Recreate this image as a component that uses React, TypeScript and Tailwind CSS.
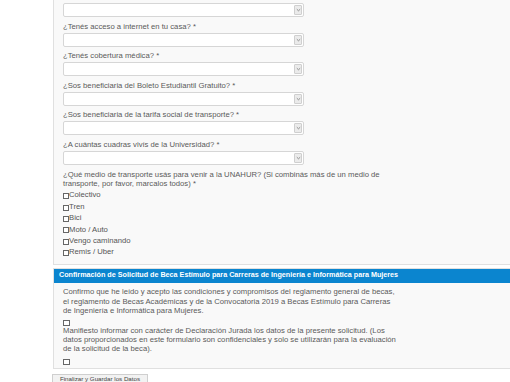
import React from "react";

const font = { fontFamily: '"Liberation Sans", Arial, sans-serif' };

function Select() {
  return (
    <div className="flex h-[14px] w-[241px] items-stretch rounded-[2px] border border-[#d6d6d6] bg-white">
      <div className="flex-1" />
      <div className="my-[1px] mr-[1px] flex w-[8px] items-center justify-center rounded-[1px] border border-[#cfcfcf] bg-[#ebebeb]">
        <svg width="5" height="4" viewBox="0 0 5 4">
          <path d="M0.8 1.2 L2.5 2.8 L4.2 1.2" fill="none" stroke="#777" strokeWidth="0.8" />
        </svg>
      </div>
    </div>
  );
}

function Field({ label }: { label: string }) {
  return (
    <div className="mb-[4.6px]">
      <div className="mb-[2px] whitespace-nowrap text-[7.7px] leading-[9px] text-[#5a5a5a]">{label}</div>
      <Select />
    </div>
  );
}

function Box() {
  return <span className="inline-block h-[6px] w-[6px] shrink-0 border border-[#666] bg-white" />;
}

const transports = ["Colectivo", "Tren", "Bici", "Moto / Auto", "Vengo caminando", "Remis / Uber"];

export default function App() {
  return (
    <div className="h-[382px] w-[510px] overflow-hidden bg-white" style={font}>
      <div className="ml-[53px] w-[470px]">
        {/* first panel */}
        <div className="border-x border-b border-[#e0e0e0] bg-[#f9f9f9] pb-[6px] pl-[9px] pt-[3px]">
          <div className="mb-[4.6px]">
            <Select />
          </div>
          <Field label="¿Tenés acceso a internet en tu casa? *" />
          <Field label="¿Tenés cobertura médica? *" />
          <Field label="¿Sos beneficiaria del Boleto Estudiantil Gratuito? *" />
          <Field label="¿Sos beneficiaria de la tarifa social de transporte? *" />
          <Field label="¿A cuántas cuadras vivís de la Universidad? *" />
          <div className="whitespace-nowrap text-[7.7px] leading-[9.3px] text-[#5a5a5a]">
            ¿Qué medio de transporte usás para venir a la UNAHUR? (Si combinás más de un medio de
            <br />
            transporte, por favor, marcalos todos) *
          </div>
          <div className="mt-[1.3px] flex flex-col">
            {transports.map((t) => (
              <div key={t} className="flex h-[11.4px] items-center text-[7.7px] text-[#555]">
                <span className="mt-[2px] flex">
                  <Box />
                </span>
                <span>{t}</span>
              </div>
            ))}
          </div>
        </div>

        {/* second panel */}
        <div className="mt-[3px] border border-[#e0e0e0] bg-[#f9f9f9]">
          <div className="flex h-[14px] items-center justify-between bg-[#0b85cf] pl-[5px] pr-[4px]">
            <span className="whitespace-nowrap text-[7.2px] font-bold text-white">
              Confirmación de Solicitud de Beca Estímulo para Carreras de Ingeniería e Informática para Mujeres
            </span>
            <svg width="6" height="4" viewBox="0 0 6 4">
              <path d="M0.8 3 L3 1 L5.2 3" fill="none" stroke="#fff" strokeWidth="1" />
            </svg>
          </div>
          <div className="whitespace-nowrap pb-[3px] pl-[9px] pt-[4.5px] text-[7.7px] leading-[9.2px] text-[#5a5a5a]">
            <div>
              Confirmo que he leído y acepto las condiciones y compromisos del reglamento general de becas,
              <br />
              el reglamento de Becas Académicas y de la Convocatoria 2019 a Becas Estímulo para Carreras
              <br />
              de Ingeniería e Informática para Mujeres.
            </div>
            <div className="mt-[5px] flex">
              <span className="inline-block h-[6px] w-[7px] border border-[#666] bg-white" />
            </div>
            <div>
              Manifiesto informar con carácter de Declaración Jurada los datos de la presente solicitud. (Los
              <br />
              datos proporcionados en este formulario son confidenciales y solo se utilizarán para la evaluación
              <br />
              de la solicitud de la beca).
            </div>
            <div className="mt-[5px] flex">
              <span className="inline-block h-[6px] w-[7px] border border-[#666] bg-white" />
            </div>
          </div>
        </div>
      </div>
      <div className="ml-[52px] mt-[5px] flex h-[9px] w-[96px] items-center justify-center border-x border-t border-[#cfcfcf] bg-[#f2f2f2] text-[6.2px] leading-[7px] text-[#444]">
        Finalizar y Guardar los Datos
      </div>
    </div>
  );
}
